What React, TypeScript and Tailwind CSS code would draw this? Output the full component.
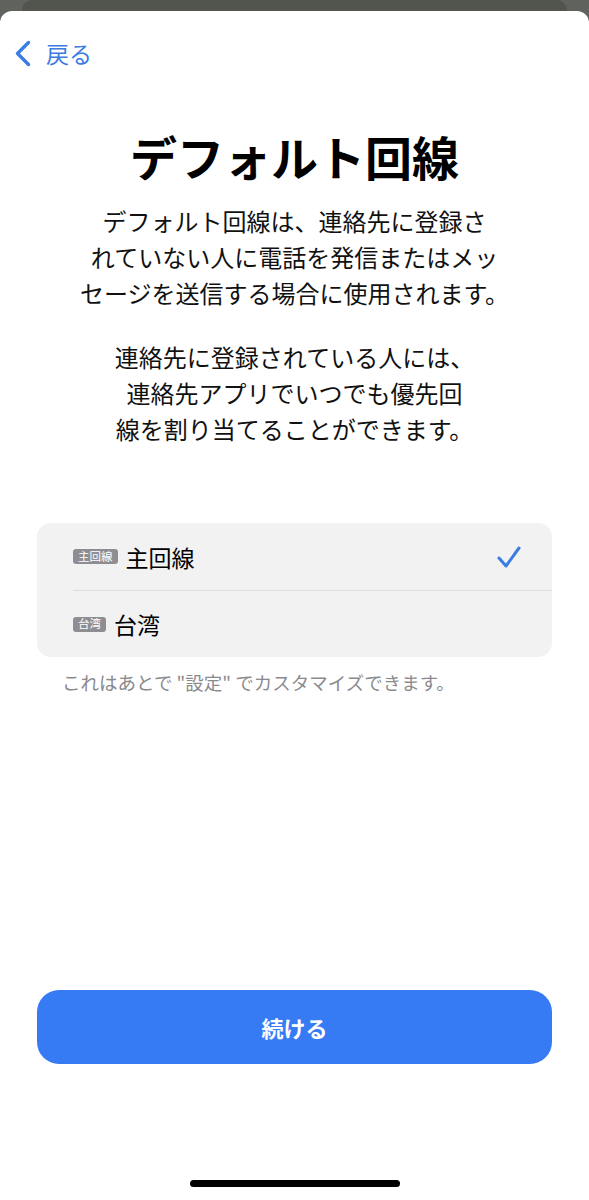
import React from "react";

const FONT = '"Noto Sans CJK JP", "Noto Sans", sans-serif';

function Badge({ label }: { label: string }) {
  return (
    <span className="inline-flex h-[15px] items-center rounded-[3px] bg-[#8e8e92] px-[5px] text-[11.5px] leading-none text-white">
      {label}
    </span>
  );
}

export default function App() {
  return (
    <div className="flex h-[1200px] flex-col bg-[#5f625d]" style={{ fontFamily: FONT }}>
      <div className="h-[11px] shrink-0 px-[22px]">
        <div className="h-full rounded-t-[10px] bg-[#52544e]" />
      </div>
      <div className="flex flex-1 flex-col rounded-t-[12px] bg-white">
        <div className="mt-[29px] flex h-[26px] items-center pl-[14px]">
          <svg width="17" height="27" viewBox="0 0 17 27" fill="none">
            <path d="M14.5 2.5 L3.5 13.5 L14.5 24.5" stroke="#3b7de0" strokeWidth="3.4" strokeLinecap="round" strokeLinejoin="round" />
          </svg>
          <span className="ml-[15px] text-[23px] leading-[26px] text-[#3b7de0]">戻る</span>
        </div>
        <h1 className="mt-[63px] text-center text-[47px] font-bold leading-[54px] text-black">デフォルト回線</h1>
        <p className="mt-[20px] text-center text-[24px] leading-[36px] text-[#111]">
          デフォルト回線は、連絡先に登録さ
          <br />
          れていない人に電話を発信またはメッ
          <br />
          セージを送信する場合に使用されます。
        </p>
        <p className="mt-[28px] text-center text-[24px] leading-[36px] text-[#111]">
          連絡先に登録されている人には、
          <br />
          連絡先アプリでいつでも優先回
          <br />
          線を割り当てることができます。
        </p>
        <div className="mx-[37px] mt-[76px] overflow-hidden rounded-[14px] bg-[#f2f2f3]">
          <div className="flex h-[67px] items-center pl-[36px] pr-[30px]">
            <Badge label="主回線" />
            <span className="ml-[8px] text-[23px] leading-[30px] text-black">主回線</span>
            <div className="flex-1" />
            <svg width="26" height="24" viewBox="0 0 26 24" fill="none">
              <path d="M3 13 L10 21 L23 3" stroke="#3b7de0" strokeWidth="3" strokeLinecap="round" strokeLinejoin="round" />
            </svg>
          </div>
          <div className="ml-[36px] h-px bg-[#dcdcde]" />
          <div className="flex h-[66px] items-center pl-[36px]">
            <Badge label="台湾" />
            <span className="ml-[8px] text-[23px] leading-[30px] text-black">台湾</span>
          </div>
        </div>
        <p className="mt-[14px] pl-[62px] text-[18.5px] leading-[22px] text-[#8a8a8e]">
          これはあとで "設定" でカスタマイズできます。
        </p>
        <div className="flex-1" />
        <button className="mx-[37px] flex h-[74px] items-center justify-center rounded-[22px] bg-[#377bf4] text-[22px] font-semibold text-white">
          続ける
        </button>
        <div className="mt-[116px] mb-[13px] flex justify-center">
          <div className="h-[7px] w-[210px] rounded-full bg-black" />
        </div>
      </div>
    </div>
  );
}
